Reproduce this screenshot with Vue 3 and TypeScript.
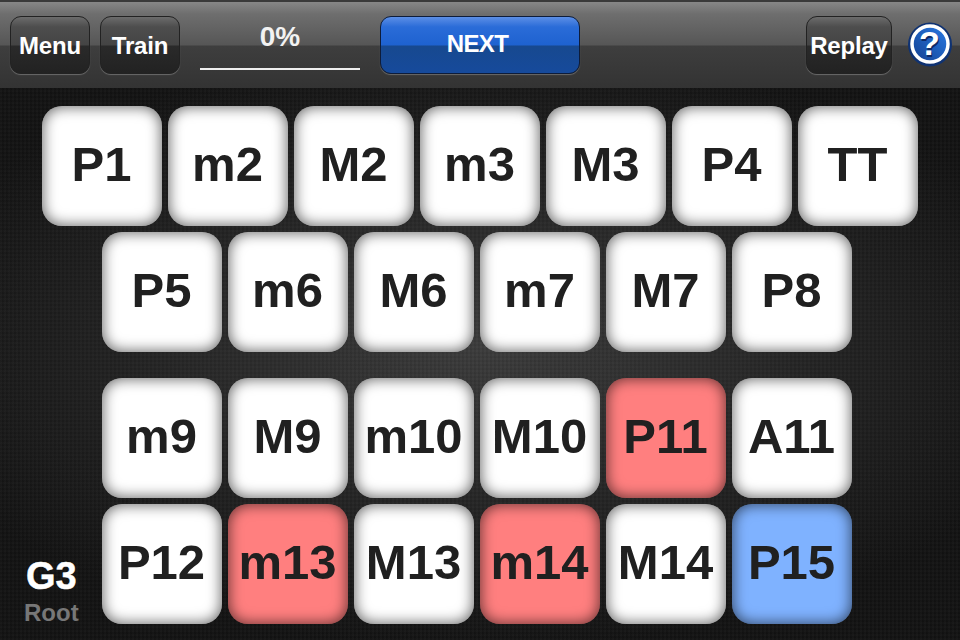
<script setup lang="ts">
type Tone = '' | 'red' | 'blue'
interface Key { label: string; tone?: Tone }
const k = (s: string): Key[] => s.split(' ').map((t) => {
  const [label, tone] = t.split(':')
  return { label, tone: (tone || '') as Tone }
})
const upper = [k('P1 m2 M2 m3 M3 P4 TT'), k('P5 m6 M6 m7 M7 P8')]
const lower = [k('m9 M9 m10 M10 P11:red A11'), k('P12 m13:red M13 m14:red M14 P15:blue')]
</script>

<template>
  <div class="app">
    <header class="bar">
      <div class="left">
        <button class="btn">Menu</button>
        <button class="btn">Train</button>
        <div class="progress">0%</div>
        <button class="btn next">NEXT</button>
      </div>
      <div class="right">
        <button class="btn replay">Replay</button>
        <svg class="help" width="44" height="45" viewBox="0 0 44 45">
          <defs>
            <linearGradient id="hg" x1="0" y1="1" x2="1" y2="0">
              <stop offset="0" stop-color="#123f8f" />
              <stop offset="1" stop-color="#2a7be6" />
            </linearGradient>
          </defs>
          <circle cx="22" cy="22.5" r="22" fill="#0f3272" />
          <circle cx="22" cy="22" r="18" fill="url(#hg)" stroke="#fff" stroke-width="3.5" />
          <text x="22.5" y="34.5" text-anchor="middle" class="q qs">?</text>
          <text x="21.5" y="33" text-anchor="middle" class="q">?</text>
        </svg>
      </div>
    </header>
    <main class="board">
      <section class="group">
        <div v-for="(row, i) in upper" :key="i" class="row" :class="{ short: i === 1 }">
          <div v-for="key in row" :key="key.label" class="key" :class="key.tone">{{ key.label }}</div>
        </div>
      </section>
      <section class="group">
        <div v-for="(row, i) in lower" :key="i" class="row short">
          <div v-for="key in row" :key="key.label" class="key" :class="key.tone">{{ key.label }}</div>
        </div>
      </section>
      <div class="root">
        <div class="note">G3</div>
        <div class="sub">Root</div>
      </div>
    </main>
  </div>
</template>

<style>
html, body { margin: 0; background: #111; }
</style>

<style scoped>
.app {
  width: 960px;
  height: 640px;
  overflow: hidden;
  display: flex;
  flex-direction: column;
  font-family: "Liberation Sans", Arial, sans-serif;
  font-weight: 700;
}
.bar {
  height: 86px;
  border-top: 2px solid #3a3a3a;
  flex: none;
  display: flex;
  justify-content: space-between;
  align-items: flex-start;
  background: linear-gradient(#878787 0, #6e6e6e 12px, #565656 43px, #3e3e3e 44px, #333 86px);
}
.left, .right { display: flex; align-items: flex-start; }
.left { padding: 14px 0 0 10px; }
.right { padding: 14px 8px 0 0; }
.btn {
  width: 80px;
  height: 58px;
  margin: 0 10px 0 0;
  padding: 2px 0 0;
  box-sizing: border-box;
  border: 1px solid #222;
  border-radius: 11px;
  box-shadow: 0 1px 1px #6a6a6a;
  background: linear-gradient(#6c6c6c 0, #4d4d4d 10px, #444 28px, #2a2a2a 29px, #222 100%);
  color: #fff;
  font: 700 24px "Liberation Sans", Arial, sans-serif;
  letter-spacing: -0.2px;
}
.progress {
  width: 160px;
  height: 54px;
  margin: 0 20px 0 10px;
  box-sizing: border-box;
  border-bottom: 2px solid #eee;
  color: #f2f2f2;
  font-size: 28px;
  line-height: 42px;
  text-align: center;
}
.next {
  width: 200px;
  padding: 0 5px 2px 0;
  letter-spacing: -0.6px;
  background: linear-gradient(#5c8fe6 0, #2a6cd8 10px, #1e62d0 28px, #17498f 29px, #164a9c 100%);
  border-color: #0d1c3a;
}
.replay { width: 86px; margin-right: 16px; }
.help { margin-top: 6px; display: block; }
.q {
  fill: #fff;
  font: 700 34px "Liberation Sans", Arial, sans-serif;
}
.qs { fill: #0d2a66; }
.board {
  position: relative;
  flex: 1;
  padding-top: 18px;
  display: flex;
  flex-direction: column;
  gap: 26px;
  background-color: #141414;
  background-image:
    repeating-linear-gradient(90deg, rgba(255, 255, 255, 0.014) 0 2px, rgba(0, 0, 0, 0.03) 2px 4px),
    repeating-linear-gradient(0deg, rgba(255, 255, 255, 0.012) 0 2px, rgba(0, 0, 0, 0.03) 2px 4px),
    radial-gradient(ellipse 600px 300px at 50% 47%, #3c3c3c 0, #242424 55%, #131313 100%);
}
.group { display: flex; flex-direction: column; gap: 6px; }
.row { display: flex; justify-content: center; gap: 6px; }
.row.short { padding-right: 6px; }
.key {
  width: 120px;
  height: 120px;
  flex: none;
  box-sizing: border-box;
  padding-right: 1px;
  border-radius: 20px;
  background: #fff;
  box-shadow: inset 0 0 14px 1px rgba(0, 0, 0, 0.6);
  color: #202020;
  font-size: 49px;
  line-height: 116px;
  text-align: center;
  white-space: nowrap;
}
.key.red { background: #ff7f7f; }
.key.blue { background: #7fb2ff; }
.root {
  position: absolute;
  left: 24px;
  bottom: 15px;
  text-align: center;
}
.note { color: #fff; font-size: 38px; line-height: 42px; margin-bottom: 4px; -webkit-text-stroke: 0.5px #fff; }
.sub { color: #777; font-size: 24px; line-height: 24px; }
</style>
